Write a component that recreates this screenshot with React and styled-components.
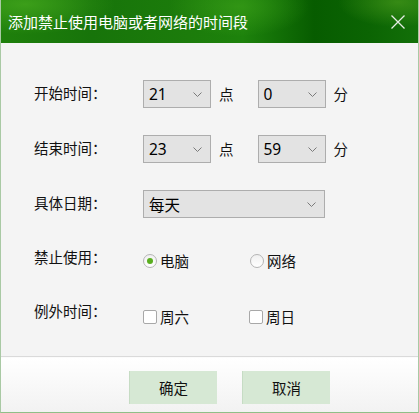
import React from "react";
import styled, { createGlobalStyle } from "styled-components";

const Global = createGlobalStyle`
  html, body { margin: 0; padding: 0; background: #f4f4f4; }
  body { font-family: "Noto Sans CJK SC", "Noto Sans", sans-serif; }
`;

const Window = styled.div`
  width: 419px;
  height: 413px;
  box-sizing: border-box;
  display: flex;
  flex-direction: column;
  border-left: 1px solid #a9c9a4;
  border-right: 1px solid #a9c9a4;
  border-bottom: 1px solid #8fbf88;
  overflow: hidden;
`;

const TitleBar = styled.div`
  height: 43px;
  flex: none;
  margin: 0 -1px;
  display: flex;
  align-items: center;
  justify-content: space-between;
  padding: 0 14px 0 8px;
  background:
    radial-gradient(ellipse 90px 30px at 6% 10%, rgba(70,170,30,0.75), transparent 100%),
    radial-gradient(ellipse 70px 30px at 57% 15%, rgba(60,160,25,0.65), transparent 100%),
    radial-gradient(ellipse 60px 25px at 95% 5%, rgba(80,160,30,0.6), transparent 100%),
    linear-gradient(90deg, #1f800c 0%, #17740a 22%, #1c7c0b 45%, #1d820c 58%, #075c00 75%, #0b6403 88%, #137009 100%);
`;

const Title = styled.div`
  color: #fff;
  font-size: 15px;
  line-height: 20px;
`;

const Close = styled.svg`
  width: 14px;
  height: 14px;
  display: block;
`;

const Body = styled.div`
  flex: 1;
  min-height: 0;
  background: #f4f4f4;
  padding: 0 0 0 33px;
  display: flex;
  flex-direction: column;
  border-bottom: 1px solid #dadada;
`;

const Row = styled.div`
  display: flex;
  align-items: flex-start;
  margin-top: ${(p) => p.$top}px;
`;

const Label = styled.div`
  width: 109px;
  flex: none;
  font-size: 14.5px;
  line-height: ${(p) => p.$lh}px;
  color: #111;
`;

const Controls = styled.div`
  display: flex;
  align-items: center;
  margin-top: ${(p) => p.$offset || 0}px;
`;

const SelectBox = styled.div`
  width: ${(p) => p.$w}px;
  height: 28px;
  box-sizing: border-box;
  border: 1px solid #adadad;
  background: #e3e3e3;
  display: flex;
  align-items: center;
  justify-content: space-between;
  padding: 0 8px 0 5px;
  font-size: 15.5px;
  color: #000;
`;

const SelectText = styled.span`
  line-height: 20px;
  font-family: ${(p) => (p.$cjk ? `"Noto Sans CJK SC", sans-serif` : `"Noto Sans", sans-serif`)};
`;

const Chevron = () => (
  <svg width="9" height="5" viewBox="0 0 9 5">
    <path d="M0.5 0.5 L4.5 4.5 L8.5 0.5" fill="none" stroke="#7a7a7a" strokeWidth="1" />
  </svg>
);

const Unit = styled.span`
  font-size: 14.5px;
  line-height: 20px;
  margin: 0 ${(p) => p.$right}px 0 8px;
  color: #111;
`;

const Option = styled.label`
  display: flex;
  align-items: center;
  width: ${(p) => p.$w}px;
  font-size: 14.5px;
  line-height: 18px;
  color: #111;
`;

const Radio = styled.span`
  width: 14px;
  height: 14px;
  box-sizing: border-box;
  border-radius: 50%;
  border: 1px solid #b5b5b5;
  background: linear-gradient(#f0f0f0, #ffffff);
  display: flex;
  align-items: center;
  justify-content: center;
  margin-right: 3px;
  &::after {
    content: "";
    width: 6px;
    height: 6px;
    border-radius: 50%;
    background: ${(p) => (p.$on ? "#5aae1f" : "transparent")};
  }
`;

const Check = styled.span`
  width: 14px;
  height: 14px;
  box-sizing: border-box;
  border: 1px solid #a8a8a8;
  border-radius: 2px;
  background: #fff;
  margin-right: 3px;
`;

const Footer = styled.div`
  height: 55px;
  box-sizing: border-box;
  flex: none;
  border-top: 1px solid #fbfbfb;
  background: linear-gradient(#ffffff, #f2f2f2);
  display: flex;
  align-items: flex-start;
  padding: 13px 0 0 128px;
  gap: 25px;
`;

const Button = styled.button`
  width: 88px;
  height: 33px;
  border: none;
  border-left: 1px solid #c6dcc4;
  background: #d6e8d4;
  font-family: "Noto Sans CJK SC", sans-serif;
  font-size: 14.5px;
  color: #111;
  padding: 0;
`;

const TimeSelect = ({ v }) => (
  <SelectBox $w={68}>
    <SelectText>{v}</SelectText>
    <Chevron />
  </SelectBox>
);

export default function App() {
  return (
    <>
      <Global />
      <Window>
        <TitleBar>
          <Title>添加禁止使用电脑或者网络的时间段</Title>
          <Close viewBox="0 0 14 14">
            <path d="M0.5 0.5 L13.5 13.5 M13.5 0.5 L0.5 13.5" stroke="#e6ece4" strokeWidth="1.3" fill="none" />
          </Close>
        </TitleBar>
        <Body>
          <Row $top={37}>
            <Label $lh={26}>开始时间：</Label>
            <Controls>
              <TimeSelect v="21" />
              <Unit $right={24}>点</Unit>
              <TimeSelect v="0" />
              <Unit $right={0}>分</Unit>
            </Controls>
          </Row>
          <Row $top={27}>
            <Label $lh={26}>结束时间：</Label>
            <Controls>
              <TimeSelect v="23" />
              <Unit $right={24}>点</Unit>
              <TimeSelect v="59" />
              <Unit $right={0}>分</Unit>
            </Controls>
          </Row>
          <Row $top={27}>
            <Label $lh={26}>具体日期：</Label>
            <Controls>
              <SelectBox $w={182}>
                <SelectText $cjk>每天</SelectText>
                <Chevron />
              </SelectBox>
            </Controls>
          </Row>
          <Row $top={29}>
            <Label $lh={20}>禁止使用：</Label>
            <Controls $offset={5}>
              <Option $w={107}>
                <Radio $on />
                电脑
              </Option>
              <Option>
                <Radio />
                网络
              </Option>
            </Controls>
          </Row>
          <Row $top={31}>
            <Label $lh={20}>例外时间：</Label>
            <Controls $offset={7}>
              <Option $w={106}>
                <Check />
                周六
              </Option>
              <Option>
                <Check />
                周日
              </Option>
            </Controls>
          </Row>
        </Body>
        <Footer>
          <Button>确定</Button>
          <Button>取消</Button>
        </Footer>
      </Window>
    </>
  );
}
